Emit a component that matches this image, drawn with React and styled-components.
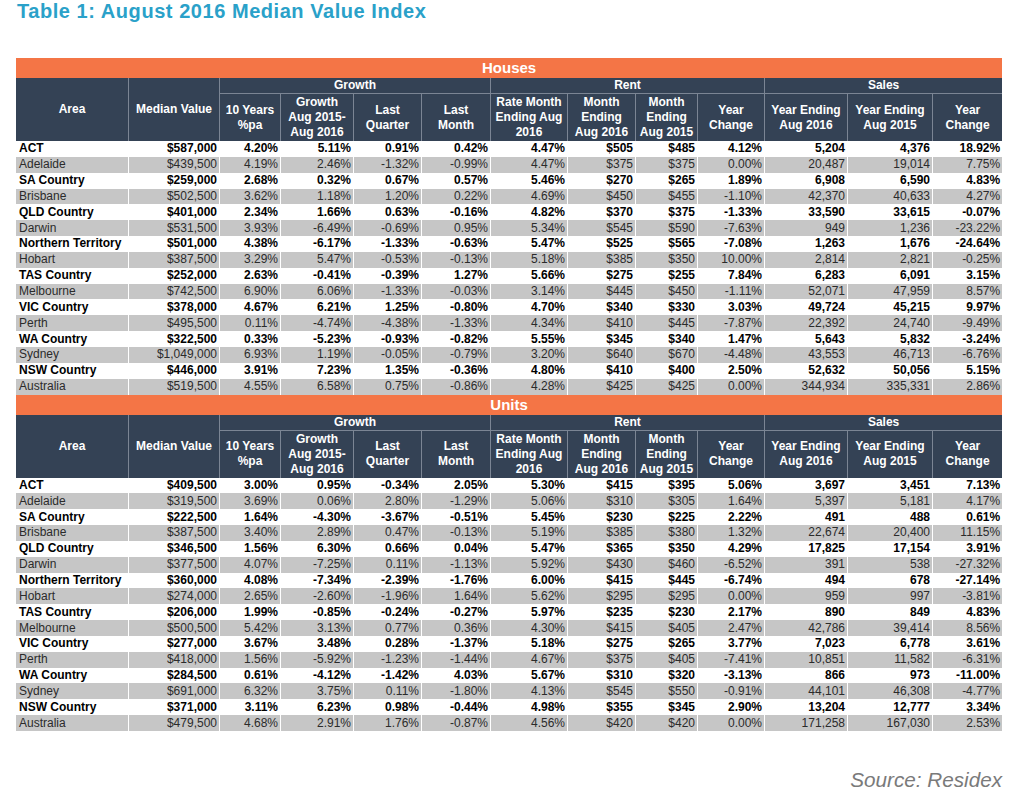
import React from "react";
import styled, { createGlobalStyle } from "styled-components";

const GlobalStyle = createGlobalStyle`
  html, body { margin: 0; padding: 0; background: #ffffff; }
  body { font-family: "Liberation Sans", Arial, sans-serif; }
`;

const Page = styled.div`
  width: 1010px;
  height: 794px;
  box-sizing: border-box;
  padding: 0 8px 0 16px;
  display: flex;
  flex-direction: column;
  overflow: hidden;
`;

const Title = styled.h1`
  margin: 0 0 36px 1px;
  font-family: "Liberation Sans", Arial, sans-serif;
  font-weight: bold;
  font-size: 20px;
  letter-spacing: 0.55px;
  line-height: 22px;
  color: #2aa1c9;
`;

const Table = styled.table`
  width: 986px;
  table-layout: fixed;
  border-collapse: separate;
  border-spacing: 0;
  font-family: "Liberation Sans", Arial, sans-serif;
  font-size: 12px;
`;

const SectionRow = styled.tr`
  height: 20px;
`;

const SectionCell = styled.td`
  background: #f47546;
  color: #ffffff;
  font-weight: bold;
  font-size: 15px;
  line-height: 20px;
  text-align: center;
  padding: 0;
`;

const GroupRow = styled.tr`
  height: 16px;
`;

const SubRow = styled.tr`
  height: 47px;
`;

const Th = styled.th`
  background: #344255;
  color: #ffffff;
  font-weight: bold;
  font-size: 12px;
  line-height: 15px;
  text-align: center;
  vertical-align: middle;
  padding: 0 1px;
  border-right: 1px solid #7b8594;
  border-bottom: ${(p) => (p.$under ? "1px solid #7b8594" : "0")};
  &:last-child { border-right: 0; }
  white-space: nowrap;
`;

const DataRow = styled.tr`
  height: 15.85px;
  background: ${(p) => (p.$bold ? "#ffffff" : "#c6c6c6")};
  color: ${(p) => (p.$bold ? "#000000" : "#2b2b2b")};
  font-weight: ${(p) => (p.$bold ? "bold" : "normal")};
`;

const Td = styled.td`
  padding: 0 2px 0 3px;
  line-height: 15px;
  text-align: ${(p) => (p.$left ? "left" : "right")};
  border-right: 1px solid #ffffff;
  white-space: nowrap;
  overflow: hidden;
  &:last-child { border-right: 0; }
`;

const Source = styled.div`
  margin-top: 37px;
  text-align: right;
  font-family: "Liberation Sans", Arial, sans-serif;
  font-style: italic;
  font-size: 20.7px;
  line-height: 24px;
  color: #7a7a7a;
`;

const widths = [113, 91, 61, 73, 68, 69, 77, 68, 62, 67, 83, 85, 69];

const houses = [
  ["ACT", "$587,000", "4.20%", "5.11%", "0.91%", "0.42%", "4.47%", "$505", "$485", "4.12%", "5,204", "4,376", "18.92%"],
  ["Adelaide", "$439,500", "4.19%", "2.46%", "-1.32%", "-0.99%", "4.47%", "$375", "$375", "0.00%", "20,487", "19,014", "7.75%"],
  ["SA Country", "$259,000", "2.68%", "0.32%", "0.67%", "0.57%", "5.46%", "$270", "$265", "1.89%", "6,908", "6,590", "4.83%"],
  ["Brisbane", "$502,500", "3.62%", "1.18%", "1.20%", "0.22%", "4.69%", "$450", "$455", "-1.10%", "42,370", "40,633", "4.27%"],
  ["QLD Country", "$401,000", "2.34%", "1.66%", "0.63%", "-0.16%", "4.82%", "$370", "$375", "-1.33%", "33,590", "33,615", "-0.07%"],
  ["Darwin", "$531,500", "3.93%", "-6.49%", "-0.69%", "0.95%", "5.34%", "$545", "$590", "-7.63%", "949", "1,236", "-23.22%"],
  ["Northern Territory", "$501,000", "4.38%", "-6.17%", "-1.33%", "-0.63%", "5.47%", "$525", "$565", "-7.08%", "1,263", "1,676", "-24.64%"],
  ["Hobart", "$387,500", "3.29%", "5.47%", "-0.53%", "-0.13%", "5.18%", "$385", "$350", "10.00%", "2,814", "2,821", "-0.25%"],
  ["TAS Country", "$252,000", "2.63%", "-0.41%", "-0.39%", "1.27%", "5.66%", "$275", "$255", "7.84%", "6,283", "6,091", "3.15%"],
  ["Melbourne", "$742,500", "6.90%", "6.06%", "-1.33%", "-0.03%", "3.14%", "$445", "$450", "-1.11%", "52,071", "47,959", "8.57%"],
  ["VIC Country", "$378,000", "4.67%", "6.21%", "1.25%", "-0.80%", "4.70%", "$340", "$330", "3.03%", "49,724", "45,215", "9.97%"],
  ["Perth", "$495,500", "0.11%", "-4.74%", "-4.38%", "-1.33%", "4.34%", "$410", "$445", "-7.87%", "22,392", "24,740", "-9.49%"],
  ["WA Country", "$322,500", "0.33%", "-5.23%", "-0.93%", "-0.82%", "5.55%", "$345", "$340", "1.47%", "5,643", "5,832", "-3.24%"],
  ["Sydney", "$1,049,000", "6.93%", "1.19%", "-0.05%", "-0.79%", "3.20%", "$640", "$670", "-4.48%", "43,553", "46,713", "-6.76%"],
  ["NSW Country", "$446,000", "3.91%", "7.23%", "1.35%", "-0.36%", "4.80%", "$410", "$400", "2.50%", "52,632", "50,056", "5.15%"],
  ["Australia", "$519,500", "4.55%", "6.58%", "0.75%", "-0.86%", "4.28%", "$425", "$425", "0.00%", "344,934", "335,331", "2.86%"],
];

const units = [
  ["ACT", "$409,500", "3.00%", "0.95%", "-0.34%", "2.05%", "5.30%", "$415", "$395", "5.06%", "3,697", "3,451", "7.13%"],
  ["Adelaide", "$319,500", "3.69%", "0.06%", "2.80%", "-1.29%", "5.06%", "$310", "$305", "1.64%", "5,397", "5,181", "4.17%"],
  ["SA Country", "$222,500", "1.64%", "-4.30%", "-3.67%", "-0.51%", "5.45%", "$230", "$225", "2.22%", "491", "488", "0.61%"],
  ["Brisbane", "$387,500", "3.40%", "2.89%", "0.47%", "-0.13%", "5.19%", "$385", "$380", "1.32%", "22,674", "20,400", "11.15%"],
  ["QLD Country", "$346,500", "1.56%", "6.30%", "0.66%", "0.04%", "5.47%", "$365", "$350", "4.29%", "17,825", "17,154", "3.91%"],
  ["Darwin", "$377,500", "4.07%", "-7.25%", "0.11%", "-1.13%", "5.92%", "$430", "$460", "-6.52%", "391", "538", "-27.32%"],
  ["Northern Territory", "$360,000", "4.08%", "-7.34%", "-2.39%", "-1.76%", "6.00%", "$415", "$445", "-6.74%", "494", "678", "-27.14%"],
  ["Hobart", "$274,000", "2.65%", "-2.60%", "-1.96%", "1.64%", "5.62%", "$295", "$295", "0.00%", "959", "997", "-3.81%"],
  ["TAS Country", "$206,000", "1.99%", "-0.85%", "-0.24%", "-0.27%", "5.97%", "$235", "$230", "2.17%", "890", "849", "4.83%"],
  ["Melbourne", "$500,500", "5.42%", "3.13%", "0.77%", "0.36%", "4.30%", "$415", "$405", "2.47%", "42,786", "39,414", "8.56%"],
  ["VIC Country", "$277,000", "3.67%", "3.48%", "0.28%", "-1.37%", "5.18%", "$275", "$265", "3.77%", "7,023", "6,778", "3.61%"],
  ["Perth", "$418,000", "1.56%", "-5.92%", "-1.23%", "-1.44%", "4.67%", "$375", "$405", "-7.41%", "10,851", "11,582", "-6.31%"],
  ["WA Country", "$284,500", "0.61%", "-4.12%", "-1.42%", "4.03%", "5.67%", "$310", "$320", "-3.13%", "866", "973", "-11.00%"],
  ["Sydney", "$691,000", "6.32%", "3.75%", "0.11%", "-1.80%", "4.13%", "$545", "$550", "-0.91%", "44,101", "46,308", "-4.77%"],
  ["NSW Country", "$371,000", "3.11%", "6.23%", "0.98%", "-0.44%", "4.98%", "$355", "$345", "2.90%", "13,204", "12,777", "3.34%"],
  ["Australia", "$479,500", "4.68%", "2.91%", "1.76%", "-0.87%", "4.56%", "$420", "$420", "0.00%", "171,258", "167,030", "2.53%"],
];

const subHeads = [
  ["10 Years", "%pa"],
  ["Growth", "Aug 2015-", "Aug 2016"],
  ["Last", "Quarter"],
  ["Last", "Month"],
  ["Rate Month", "Ending Aug", "2016"],
  ["Month", "Ending", "Aug 2016"],
  ["Month", "Ending", "Aug 2015"],
  ["Year", "Change"],
  ["Year Ending", "Aug 2016"],
  ["Year Ending", "Aug 2015"],
  ["Year", "Change"],
];

function Lines({ lines }) {
  return lines.map((l, i) => (
    <React.Fragment key={i}>
      {i > 0 && <br />}
      {l}
    </React.Fragment>
  ));
}

function Section({ name, rows }) {
  return (
    <tbody>
      <SectionRow>
        <SectionCell colSpan={13}>{name}</SectionCell>
      </SectionRow>
      <GroupRow>
        <Th rowSpan={2}>Area</Th>
        <Th rowSpan={2}>Median Value</Th>
        <Th colSpan={4} $under>Growth</Th>
        <Th colSpan={4} $under>Rent</Th>
        <Th colSpan={3} $under>Sales</Th>
      </GroupRow>
      <SubRow>
        {subHeads.map((h, i) => (
          <Th key={i}>
            <Lines lines={h} />
          </Th>
        ))}
      </SubRow>
      {rows.map((r, i) => (
        <DataRow key={i} $bold={i % 2 === 0}>
          {r.map((c, j) => (
            <Td key={j} $left={j === 0}>
              {c}
            </Td>
          ))}
        </DataRow>
      ))}
    </tbody>
  );
}

export default function App() {
  return (
    <>
      <GlobalStyle />
      <Page>
        <Title>Table 1: August 2016 Median Value Index</Title>
        <Table>
          <colgroup>
            {widths.map((w, i) => (
              <col key={i} style={{ width: w }} />
            ))}
          </colgroup>
          <Section name="Houses" rows={houses} />
          <Section name="Units" rows={units} />
        </Table>
        <Source>Source: Residex</Source>
      </Page>
    </>
  );
}
